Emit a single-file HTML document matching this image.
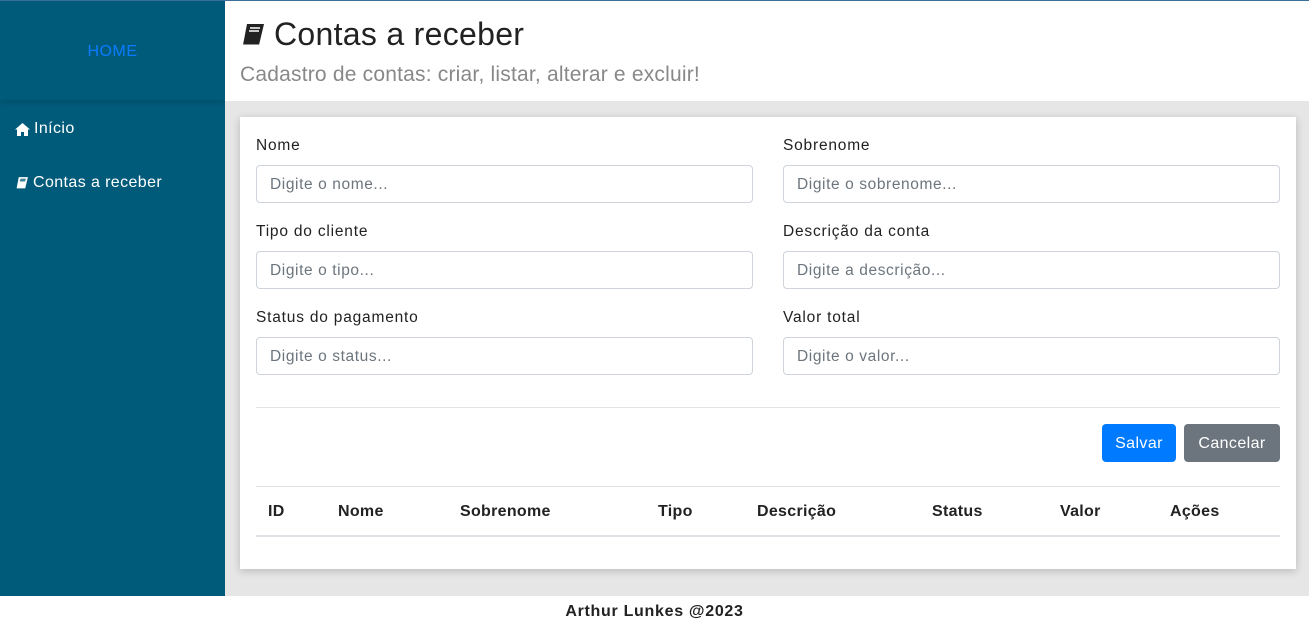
<!DOCTYPE html>
<html><head><meta charset="utf-8"><style>
*{box-sizing:border-box;margin:0;padding:0}
body{width:1309px;height:622px;overflow:hidden;font-family:"Liberation Sans",sans-serif;background:#fff;position:relative}
.topline{position:absolute;left:0;top:0;width:1309px;height:1px;background:#3a6f99;z-index:5}
.side{position:absolute;left:0;top:0;width:225px;height:596px;background:#005b7a}
.home{height:100px;display:flex;align-items:center;justify-content:center;color:#0a7bff;font-size:16px;letter-spacing:.5px;box-shadow:0 2px 6px rgba(0,0,0,.15);padding-top:3px}
.nav{color:#fff;font-size:16px;letter-spacing:.4px;position:absolute;left:15px;display:flex;align-items:center;gap:4px}
.main{position:absolute;left:225px;top:0;right:0;height:596px;background:#e6e6e6}
.head{background:#fff;height:101px}
.head h1{font-weight:normal;font-size:32px;color:#222;position:absolute;top:16px;left:15px;display:flex;align-items:center;gap:8px;letter-spacing:.3px}
.head p{position:absolute;top:63px;left:15px;font-size:21px;color:#888;letter-spacing:.2px}
.card{position:absolute;left:15px;top:117px;width:1056px;height:452px;background:#fff;box-shadow:0 2px 8px rgba(0,0,0,.2)}
.lb{position:absolute;font-size:15.5px;color:#222;letter-spacing:.8px}
.in{position:absolute;width:497px;height:38px;border:1px solid #ced4da;border-radius:4px;font-size:15.5px;letter-spacing:.6px;color:#6c757d;padding:10px 13px 0}
.hr{position:absolute;left:16px;width:1024px;height:1px;background:#e3e3e3}
.btn{position:absolute;top:307px;height:38px;border-radius:4px;color:#fff;font-size:16px;letter-spacing:.4px;display:flex;align-items:center;justify-content:center;padding-top:2px}
.th{position:absolute;top:386px;font-size:16px;font-weight:bold;color:#222;letter-spacing:.3px}
.foot{position:absolute;top:603px;left:0;width:1309px;text-align:center;font-weight:bold;font-size:16px;color:#222;letter-spacing:.7px}
</style></head><body>
<div class="topline"></div>
<div class="side"><div class="home">HOME</div>
<div class="nav" style="top:120px"><svg width="15" height="13" viewBox="0 0 15 13"><path d="M7.5 0L0 6.5h2V13h4V9h3v4h4V6.5h2z" fill="#fff"/></svg>Início</div>
<div class="nav" style="top:174px"><svg width="14" height="14" viewBox="0 0 26 26"><path d="M7 2h17l-5 21H3L7 2z" fill="#fff"/><path d="M10 6h10M9 9h10" stroke="#005b7a" stroke-width="2"/></svg>Contas a receber</div></div>
<div class="main">
<div class="head"><h1><svg width="26" height="26" viewBox="0 0 26 26"><path d="M7 2h17l-5 21H3L7 2z" fill="#222"/><path d="M10 6h10M9 9h10" stroke="#fff" stroke-width="1.5"/><path d="M3 23h16" stroke="#fff" stroke-width="1"/></svg>Contas a receber</h1><p>Cadastro de contas: criar, listar, alterar e excluir!</p></div>
<div class="card">
<div class="lb" style="left:16px;top:20px">Nome</div><div class="lb" style="left:543px;top:20px">Sobrenome</div>
<div class="in" style="left:16px;top:48px">Digite o nome...</div><div class="in" style="left:543px;top:48px">Digite o sobrenome...</div>
<div class="lb" style="left:16px;top:106px">Tipo do cliente</div><div class="lb" style="left:543px;top:106px">Descrição da conta</div>
<div class="in" style="left:16px;top:134px">Digite o tipo...</div><div class="in" style="left:543px;top:134px">Digite a descrição...</div>
<div class="lb" style="left:16px;top:192px">Status do pagamento</div><div class="lb" style="left:543px;top:192px">Valor total</div>
<div class="in" style="left:16px;top:220px">Digite o status...</div><div class="in" style="left:543px;top:220px">Digite o valor...</div>
<div class="hr" style="top:290px"></div>
<div class="btn" style="left:862px;width:74px;background:#007bff">Salvar</div>
<div class="btn" style="left:944px;width:96px;background:#6c757d">Cancelar</div>
<div class="hr" style="top:369px"></div>
<div class="th" style="left:28px">ID</div><div class="th" style="left:98px">Nome</div><div class="th" style="left:220px">Sobrenome</div><div class="th" style="left:418px">Tipo</div><div class="th" style="left:517px">Descrição</div><div class="th" style="left:692px">Status</div><div class="th" style="left:820px">Valor</div><div class="th" style="left:930px">Ações</div>
<div class="hr" style="top:418px;height:2px;background:#dee2e6"></div>
</div></div>
<div class="foot">Arthur Lunkes @2023</div>
</body></html>
